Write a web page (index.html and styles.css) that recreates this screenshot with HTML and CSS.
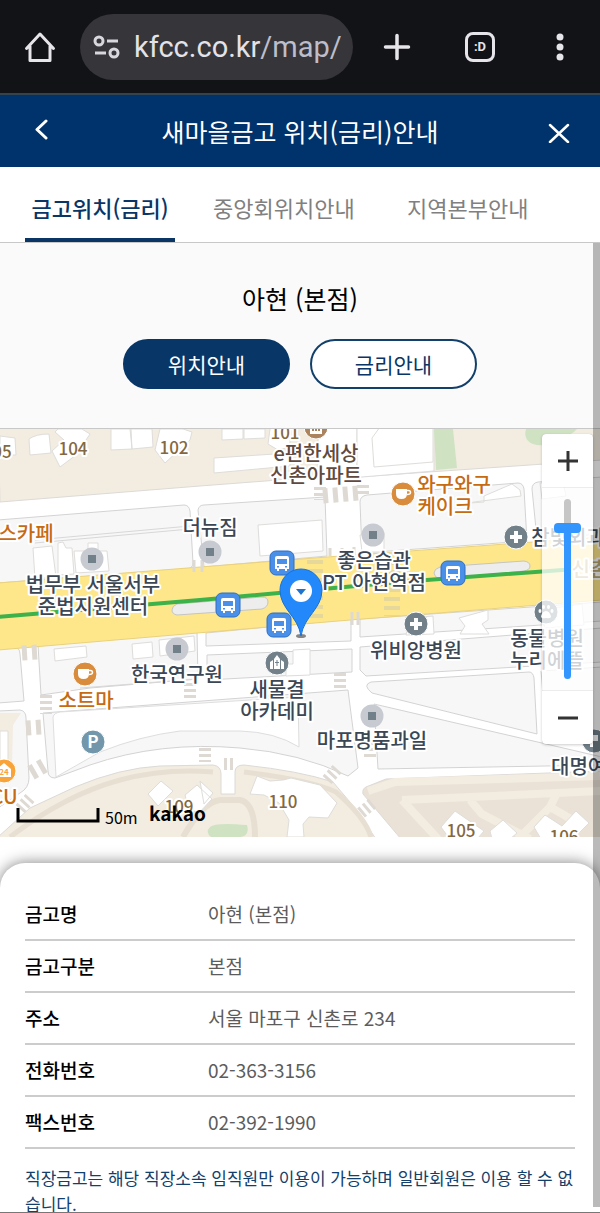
FILE: index.html
```html
<!DOCTYPE html>
<html lang="ko">
<head>
    <meta charset="UTF-8">
    <meta name="viewport" content="width=device-width, initial-scale=1.0">
    <title>새마을금고 위치(금리)안내</title>
    <link rel="stylesheet" href="styles.css">
</head>
<body>
    <div class="browser-bar">
        <button class="bar-btn" type="button" aria-label="홈">
            <svg width="34" height="34" viewBox="0 0 34 34" fill="none" stroke="#e6e5ea" stroke-width="3" stroke-linejoin="round" stroke-linecap="round">
                <path d="M3.500 18.500L17 4l13.500 14.500M7 16v14.500h20V16"/>
            </svg>
        </button>
        <button class="address" type="button">
            <svg width="28" height="24" viewBox="0 0 28 24" fill="none" stroke="#d7d7dd" stroke-width="3">
                <circle cx="6" cy="6" r="4"/>
                <path d="M14 6h11M2 18h11"/>
                <circle cx="21" cy="18" r="4"/>
            </svg>
            <span class="url">kfcc.co.kr<span class="url-path">/map/</span></span>
        </button>
        <button class="bar-btn bar-btn-wide" type="button" aria-label="새 탭">
            <svg width="28" height="28" viewBox="0 0 28 28" stroke="#e6e5ea" stroke-width="3.500" stroke-linecap="round">
                <path d="M2.500 14h23M14 2.500v23"/>
            </svg>
        </button>
        <button class="bar-btn" type="button" aria-label="탭 전환"><span class="tab-count">:D</span></button>
        <button class="bar-btn" type="button" aria-label="메뉴">
            <svg width="8" height="28" viewBox="0 0 8 28" fill="#e6e5ea">
                <circle cx="4" cy="4" r="3.500"/>
                <circle cx="4" cy="14" r="3.500"/>
                <circle cx="4" cy="24" r="3.500"/>
            </svg>
        </button>
    </div>

    <header class="page-header">
        <a class="header-btn" href="#" aria-label="이전">
            <svg width="16" height="24" viewBox="0 0 16 24" fill="none" stroke="#fff" stroke-width="3" stroke-linecap="round" stroke-linejoin="round">
                <path d="M12 2L3 10.500l9 8.500"/>
            </svg>
        </a>
        <h1>새마을금고 위치(금리)안내</h1>
        <button class="header-btn" type="button" aria-label="닫기">
            <svg width="24" height="24" viewBox="0 0 24 24" fill="none" stroke="#fff" stroke-width="2.500" stroke-linecap="round">
                <path d="M3 6l18 17M21 6L3 23"/>
            </svg>
        </button>
    </header>

    <nav class="tabs">
        <a class="active" href="#">금고위치(금리)</a>
        <a href="#">중앙회위치안내</a>
        <a href="#">지역본부안내</a>
    </nav>

    <main class="content">
        <section class="branch">
            <h2>아현 (본점)</h2>
            <div class="branch-buttons">
                <button class="pill pill-on" type="button">위치안내</button>
                <button class="pill" type="button">금리안내</button>
            </div>
        </section>

        <section class="map">
            <svg class="map-canvas" viewBox="0 429 600 408" preserveAspectRatio="xMidYMid slice">
                <defs>
                    <g id="bus">
                        <rect x="-12" y="-12" width="24" height="24" rx="6" fill="#4a8fe8" stroke="#2f6fc4"/>
                        <path fill="#fff" fill-rule="evenodd" d="M-5-7H5q2 0 2 2V6H5v2H3V6H-3v2H-5V6H-7V-5q0-2 2-2zM-5-4v5H5v-5zM-5 3v1.500h2V3zM3 3v1.500h2V3z"/>
                    </g>
                    <g id="spot">
                        <circle r="11.500" fill="#c8cad1"/>
                        <rect x="-4" y="-4" width="8" height="8" fill="#72808a"/>
                    </g>
                    <g id="hospital">
                        <circle r="12" fill="#72808a" stroke="#fff"/>
                        <path d="M0-6V6M-6 0H6" stroke="#fff" stroke-width="4"/>
                    </g>
                    <g id="cafe">
                        <circle r="12" fill="#d88c3c" stroke="#fff"/>
                        <path fill="#fff" d="M-7-5H4v5q0 5-5.500 5T-7 0z"/>
                        <path fill="none" stroke="#fff" stroke-width="1.500" d="M4-3.500h1.500q2 0 2 2t-3.500 2"/>
                    </g>
                </defs>

                <rect y="429" width="600" height="408" fill="#fff"/>

                <!-- apartment complexes -->
                <g stroke="#dcdad7">
                    <path fill="#f3ece1" d="M-2 427H318V477L200 486 0 502z"/>
                    <path fill="#f3ece1" d="M357 427H602V460L357 477z"/>
                    <path fill="#f3ece1" d="M-2 837L30 808 75 787Q120 768 160 766L213 765Q221 766 221 774V794H235V772Q235 765 244 765Q300 771 333 782L355 808 376 839H-2z"/>
                    <path fill="#eae2d6" d="M401 839L363 794Q362 789 366 787L386 779 602 771V839z"/>
                </g>
                <path fill="#fff" stroke="#dcdcdc" d="M357 427H434V471L362 477Q357 477 357 470z"/>
                <path fill="#cfe3c2" d="M434 429H453L457 468 436 470z"/>
                <path fill="#cfe3c2" d="M526 429H577Q570 437 561 435Q548 449 533 444Q523 440 526 429z"/>
                <path fill="none" stroke="#e8dfd3" stroke-width="5" d="M10 837Q65 795 120 780Q165 768 213 772M244 772Q310 780 336 792Q365 817 371 837"/>
                <path fill="none" stroke="#e8dfd3" stroke-width="6" d="M183 837Q203 802 220 800H240Q255 803 255 837"/>
                <path fill="none" stroke="#f3ece1" stroke-width="8" d="M368 791L395 782 602 776M402 800L602 791M402 800L438 839M470 800L482 814 530 839M556 795L550 807 518 839M550 807L578 823"/>
                <path fill="#cfe3c2" d="M210 827Q215 822 247 825Q250 836 240 837H211Q205 832 210 827z"/>
                <path fill="#e8dfd3" d="M0 760Q32 790 0 805z"/>

                <!-- blocks -->
                <g fill="#f7f7f8" stroke="#d3d3d3">
                    <path d="M-2 520L184 505Q189 505 190 511L193 563Q193 568 187 569L-2 583z"/>
                    <path d="M198 510Q199 505 204 505L325 497 327 556 204 567z"/>
                    <path d="M360 502Q360 496 367 495L518 483Q523 483 524 489L527 541 362 553z"/>
                    <path d="M532 489Q532 483 538 482L602 477V534L537 539z"/>
                    <path d="M-2 649L13 647Q20 647 20 654L24 701-2 703z"/>
                    <path d="M38 645L197 632 198 679 90 688 41 695z"/>
                    <path d="M206 633L351 619V641L206 646z"/>
                    <path d="M207 655L352 649V672L207 680z"/>
                    <path d="M360 619L602 602V621L360 637z"/>
                    <path d="M360 647L602 628V662L366 676 360 670z"/>
                    <path d="M371 682L529 672Q533 672 534 678L537 734 372 693Q362 685 371 682z"/>
                    <path d="M541 671L602 667V742L546 730z"/>
                    <path d="M374 704L602 757V765L378 769z"/>
                    <path d="M-2 711L20 710Q26 711 26 718L29 778Q29 788 20 793L-2 808z"/>
                    <path d="M43 713L348 690 358 768 348 776Q300 753 240 748Q160 741 90 765L55 778Q48 778 48 771z"/>
                </g>
                <path fill="#fff" stroke="#dedede" d="M53 717Q54 713 60 712L298 697 299 747Q275 732 240 731H180Q140 736 100 752L56 777z"/>
                <path fill="#f3ece1" d="M0 713H21L13 725 12 765H0z"/>

                <!-- main avenue -->
                <path fill="#fee78a" stroke="#e9d17c" d="M-2 583L327 557 602 537V600L350 620 -2 650z"/>
                <g fill="#ededee" stroke="#c4c4c4">
                    <path d="M177 604L262 597Q268 597 268 602T262 609L177 615Q172 614 172 610T177 604z"/>
                    <path d="M440 567L524 561Q530 562 530 566T524 571L440 579Q434 577 434 573T440 567z"/>
                </g>
                <path fill="none" stroke="#3db14a" stroke-width="4" d="M-2 617L200 600 400 582 602 567"/>
                <path fill="none" stroke="#d8d8d8" d="M35 543L190 529M35 540L190 526M80 688L198 679"/>

                <!-- crossings -->
                <g fill="none" stroke="#dedad3">
                    <path stroke-width="15" stroke-dasharray="5 5" d="M323 496L359 493M22 653L38 652M26 728L42 727M31 773L45 765"/>
                    <path stroke-width="12" stroke-dasharray="3 3" d="M320 487V500M363 485V497M190 683V699M340 673V690M46 695V714M205 748V762M370 757V742M224 764H236M327 780L338 768M361 813L373 803M20 809L30 798"/>
                    <path stroke="#e6d79a" stroke-width="16" stroke-dasharray="4 5" d="M315 560V620M392 552V616"/>
                    <path stroke-width="3" d="M194 560V572M202 560V572M352 612V625M358 612V625M330 548V556M342 548V556M354 547V555"/>
                </g>

                <!-- buildings -->
                <g fill="#fff" stroke="#deddda">
                    <path d="M0 436L15 438 16 455H0zM29 439Q36 434 49 434L51 453 30 455zM55 432L64 440 52 451 60 467 76 455 90 434 82 429H58z"/>
                    <path d="M111 429L130 429 132 449 111 450zM131 429H152L153 447 132 449zM155 450L165 463 190 440 192 432 183 429H160z"/>
                    <path d="M222 429H243V439L222 440zM244 429H265V438L244 439zM214 458L290 453V466L214 473zM270 429H290V447L278 450 268 444z"/>
                    <path d="M380 427H433V462L374 467 372 438z"/>
                    <path d="M33 548L52 546 56 577 35 579zM58 543L63 542 66 548 72 548 74 574 58 575zM74 551H88V543H98V551L107 551 109 571 76 573z"/>
                    <path d="M258 525L322 520 323 551 260 556zM470 503L484 502 484 496 512 484 520 490 521 496 474 502zM540 483L563 482 566 496 542 499z"/>
                    <path d="M54 649L86 646 87 657 55 661zM132 644L152 642 153 657 133 659zM159 640L194 636 195 651 160 656zM293 650L310 649V675L286 676V664H293z"/>
                    <path d="M360 535L384 533V552H362zM410 618L433 616 434 634 406 635zM459 618L488 610V620L482 624 489 634 460 634 465 626zM540 610L582 604 584 625 545 628z"/>
                    <path d="M0 731H8V766H0zM148 794L161 781 173 791 158 806zM185 795L197 785 212 799 198 814 188 806zM200 781L213 793 204 804z"/>
                    <path d="M250 794L257 776 270 781 283 780 291 778 320 785 337 803 328 818 309 817 303 824 304 837H287L289 820 279 803 264 795z"/>
                    <path d="M441 827L455 811 484 831 478 838H449zM490 831L503 820 517 833 510 839H492zM534 827L545 815 562 826 576 811 589 823 573 839H541z"/>
                </g>

                <!-- place icons -->
                <use href="#spot" x="92" y="559"/>
                <use href="#spot" x="210" y="552"/>
                <use href="#spot" x="373" y="535"/>
                <use href="#spot" x="177" y="649"/>
                <use href="#spot" x="372" y="716"/>
                <use href="#hospital" x="516" y="537"/>
                <use href="#hospital" x="416" y="624"/>
                <use href="#cafe" x="403" y="494"/>
                <use href="#cafe" x="85" y="674"/>
                <g transform="translate(316 427)">
                    <circle r="12" fill="#ab835c" stroke="#fff"/>
                    <path fill="#fff" fill-rule="evenodd" d="M-6-5H6V7H-6zM-4 2v2h2V2zM-1 2v2h2V2zM2 2v2h2V2z"/>
                </g>
                <g transform="translate(277 663)">
                    <circle r="12" fill="#72808a" stroke="#fff"/>
                    <path fill="#fff" fill-rule="evenodd" d="M-7-1l3-2V6h-3zM-3 6V-4L0-8l3 4V6zM4-3l3 2v7H4zM-.500-3v2H-2v1h1.500v3h1V0H2v-1H.500v-2z"/>
                </g>
                <g transform="translate(546 612)">
                    <circle r="12" fill="#72808a" stroke="#fff"/>
                    <g fill="#fff">
                        <path d="M0-1C3-1 5 3 5 5Q4 7 0 6Q-4 7-5 5C-5 3-3-1 0-1z"/>
                        <ellipse cx="-6" cy="-1" rx="1.500" ry="2"/>
                        <ellipse cx="6" cy="-1" rx="1.500" ry="2"/>
                        <ellipse cx="-2.500" cy="-5" rx="1.500" ry="2"/>
                        <ellipse cx="2.500" cy="-5" rx="1.500" ry="2"/>
                    </g>
                </g>
                <g transform="translate(93 742)">
                    <circle r="12" fill="#7297aa" stroke="#fff"/>
                    <text class="icon-text" x="0" y="6">P</text>
                </g>
                <g transform="translate(4 771)">
                    <circle r="12" fill="#f9a43a" stroke="#fff"/>
                    <path fill="#fff" d="M-7-2L0-8l7 6V6H-7z"/>
                    <text class="icon-num" x="0" y="4">24</text>
                </g>
                <g transform="translate(594 741)">
                    <circle r="12" fill="#72808a" stroke="#fff"/>
                    <path fill="#fff" d="M-4-6H4V0H-1V6H-4z"/>
                </g>

                <!-- place names -->
                <g class="label label-number">
                    <text x="2" y="458">05</text>
                    <text x="73" y="455">104</text>
                    <text x="174" y="454">102</text>
                    <text x="285" y="439">101</text>
                    <text x="179" y="813">109</text>
                    <text x="283" y="808">110</text>
                    <text x="461" y="837">105</text>
                    <text x="564" y="843">106</text>
                </g>
                <g class="label label-apt">
                    <text x="316" y="461">e편한세상</text>
                    <text x="316" y="483">신촌아파트</text>
                </g>
                <g class="label label-food">
                    <text x="26" y="541">스카페</text>
                    <text x="454" y="492">와구와구</text>
                    <text x="445" y="514">케이크</text>
                    <text x="86" y="708">소트마</text>
                    <text x="4" y="804">CU</text>
                </g>
                <g class="label">
                    <text x="210" y="535">더뉴짐</text>
                    <text x="93" y="592">법무부 서울서부</text>
                    <text x="93" y="614">준법지원센터</text>
                    <text x="374" y="568">좋은습관</text>
                    <text x="374" y="590">PT 아현역점</text>
                    <text x="177" y="682">한국연구원</text>
                    <text x="277" y="697">새물결</text>
                    <text x="277" y="719">아카데미</text>
                    <text x="416" y="658">위비앙병원</text>
                    <text x="372" y="748">마포명품과일</text>
                    <text x="568" y="545">참빛외과</text>
                    <text x="547" y="646">동물병원</text>
                    <text x="547" y="668">누리에뜰</text>
                    <text x="597" y="774">대명여행사</text>
                </g>
                <text class="label label-area" x="590" y="577">신촌</text>

                <use href="#bus" x="282" y="563"/>
                <use href="#bus" x="228" y="605"/>
                <use href="#bus" x="279" y="625"/>
                <use href="#bus" x="453" y="573"/>

                <!-- branch marker -->
                <ellipse cx="301" cy="636" rx="5" ry="2" fill="#858585"/>
                <path fill="#2389fa" stroke="#1672d8" d="M301 636C298 616 280 609 280 590A21 21 0 0 1 322 590C322 609 304 616 301 636z"/>
                <circle cx="301" cy="591" r="11" fill="#fff"/>
                <path fill="#1f74d0" d="M296 589H306L301 595z"/>

                <!-- scale bar -->
                <path fill="none" stroke="#000" stroke-width="3" d="M18 808V821H98V808"/>
                <text class="scale-text" x="105" y="824">50m</text>
                <text class="map-brand" x="149" y="821">kakao</text>
            </svg>

            <div class="zoom">
                <button type="button" aria-label="확대">
                    <svg width="22" height="22" viewBox="0 0 22 22" stroke="#333" stroke-width="3"><path d="M1 11h20M11 1v20"/></svg>
                </button>
                <input class="zoom-range" type="range" min="0" max="100" value="86" aria-label="지도 배율">
                <button type="button" aria-label="축소">
                    <svg width="22" height="22" viewBox="0 0 22 22" stroke="#333" stroke-width="3"><path d="M1 11h20"/></svg>
                </button>
            </div>
        </section>

        <section class="info">
            <table>
                <tr><th scope="row">금고명</th><td>아현 (본점)</td></tr>
                <tr><th scope="row">금고구분</th><td>본점</td></tr>
                <tr><th scope="row">주소</th><td>서울 마포구 신촌로 234</td></tr>
                <tr><th scope="row">전화번호</th><td>02-363-3156</td></tr>
                <tr><th scope="row">팩스번호</th><td>02-392-1990</td></tr>
            </table>
            <p class="notice">직장금고는 해당 직장소속 임직원만 이용이 가능하며 일반회원은 이용 할 수 없습니다.</p>
        </section>

        <div class="scroll-thumb"></div>
    </main>
</body>
</html>
```
FILE: styles.css
```css
* { box-sizing: border-box; }
body {
    margin: 0;
    height: 100vh;
    display: flex;
    flex-direction: column;
    overflow: hidden;
    font-family: 'Noto Sans CJK KR', sans-serif;
    background-color: #ffffff;
    color: #000000;
}
button {
    font-family: inherit;
    border: 0;
    padding: 0;
    background: none;
    cursor: pointer;
}
a { text-decoration: none; }
h1, h2, p { margin: 0; }
svg { display: block; }

/* browser toolbar */
.browser-bar {
    display: flex;
    align-items: center;
    flex-shrink: 0;
    height: 95px;
    background-color: #121317;
    border-bottom: 2px solid #33434f;
}
.bar-btn {
    display: flex;
    align-items: center;
    justify-content: center;
    width: 80px;
    height: 66px;
}
.bar-btn-wide { width: 87px; }
.address {
    display: flex;
    align-items: center;
    gap: 13px;
    flex: 1;
    min-width: 0;
    height: 66px;
    padding: 0 11px 0 13px;
    border-radius: 33px;
    background-color: #35353a;
}
.address svg { flex-shrink: 0; }
.url {
    overflow: hidden;
    font-family: Roboto, sans-serif;
    font-size: 29px;
    line-height: 40px;
    white-space: nowrap;
    color: #e3e2e8;
}
.url-path { color: #bdbec9; }
.tab-count {
    width: 30px;
    height: 30px;
    border: 3px solid #e6e5ea;
    border-radius: 8px;
    font-family: Roboto, sans-serif;
    font-size: 13px;
    font-weight: 700;
    line-height: 23px;
    color: #e6e5ea;
}

/* title bar */
.page-header {
    display: flex;
    align-items: center;
    justify-content: space-between;
    flex-shrink: 0;
    height: 72px;
    background-color: #00326b;
    color: #ffffff;
}
.page-header h1 {
    font-size: 25px;
    font-weight: 400;
    line-height: 36px;
}
.header-btn {
    display: flex;
    align-items: center;
    justify-content: center;
    width: 83px;
    height: 72px;
}

.tabs {
    display: flex;
    gap: 32px;
    flex-shrink: 0;
    height: 76px;
    padding: 0 25px;
    border-bottom: 1px solid #c8c8c8;
}
.tabs a {
    min-width: 150px;
    padding: 0 6px;
    font-size: 22px;
    line-height: 80px;
    text-align: center;
    white-space: nowrap;
    color: #808080;
}
.tabs .active {
    font-weight: 500;
    color: #0a3564;
    border-bottom: 4px solid #0a3564;
}

.content {
    position: relative;
    flex: 1;
    overflow: hidden;
    border-bottom: 1px solid #777777;
}
.scroll-thumb {
    position: absolute;
    top: 0;
    right: 0;
    bottom: 5px;
    width: 7px;
    background-color: rgba(0, 0, 0, 0.27);
}

.branch {
    padding: 35px 25px 39px;
    background-color: #fafafa;
    border-bottom: 1px solid #c8c8c8;
    text-align: center;
}
.branch h2 {
    margin-bottom: 21px;
    font-size: 25px;
    font-weight: 400;
    line-height: 40px;
}
.branch-buttons {
    display: flex;
    justify-content: center;
    gap: 20px;
}
.pill {
    width: 167px;
    height: 50px;
    border: 2px solid #12406b;
    border-radius: 25px;
    background-color: #ffffff;
    font-size: 21px;
    color: #0a3564;
}
.pill-on {
    background-color: #083767;
    border-color: #083767;
    color: #ffffff;
}

/* map */
.map { position: relative; }
.map-canvas {
    width: 100%;
    height: 408px;
}
.label {
    font-size: 20px;
    font-weight: 500;
    text-anchor: middle;
    fill: #3b4754;
    stroke: #ffffff;
    stroke-width: 4px;
    stroke-linejoin: round;
    paint-order: stroke;
}
.label-number {
    font-size: 17px;
    fill: #84683f;
}
.label-apt { fill: #604a3f; }
.label-food { fill: #c66a13; }
.label-area { fill: #b8a873; }
.icon-text {
    font-size: 17px;
    font-weight: 700;
    text-anchor: middle;
    fill: #ffffff;
}
.icon-num {
    font-size: 8px;
    font-weight: 700;
    text-anchor: middle;
    fill: #f9a43a;
}
.scale-text { font-size: 16px; }
.map-brand {
    font-size: 19px;
    font-weight: 700;
}
.zoom {
    position: absolute;
    top: 5px;
    right: 7px;
    display: flex;
    flex-direction: column;
    width: 51px;
    height: 310px;
    border-radius: 4px;
    background-color: rgba(255, 255, 255, 0.76);
    box-shadow: 0 1px 3px rgba(0, 0, 0, 0.2);
    overflow: hidden;
}
.zoom button {
    display: flex;
    align-items: center;
    justify-content: center;
    height: 53px;
    background-color: #ffffff;
    box-shadow: 0 0 1px rgba(0, 0, 0, 0.4);
}
.zoom-range {
    flex: 1;
    min-height: 0;
    width: 27px;
    margin: 12px auto;
    writing-mode: vertical-lr;
    direction: rtl;
    appearance: none;
    background: none;
}
.zoom-range::-webkit-slider-runnable-track {
    width: 7px;
    height: 100%;
    border-radius: 4px;
    background: linear-gradient(to top, #3396ff 84%, #c6c6c6 84%);
}
.zoom-range::-webkit-slider-thumb {
    appearance: none;
    width: 27px;
    height: 10px;
    margin-left: -10px;
    border-radius: 4px;
    background-color: #3396ff;
}

/* branch details */
.info {
    position: relative;
    min-height: 400px;
    margin-top: 26px;
    padding: 25px 25px 0;
    border-radius: 25px 25px 0 0;
    background-color: #ffffff;
    box-shadow: 0 0 15px rgba(0, 0, 0, 0.5);
}
.info table {
    width: 100%;
    border-collapse: collapse;
}
.info th, .info td {
    height: 52px;
    padding: 0;
    border-bottom: 2px solid #cccccc;
    font-size: 19px;
    line-height: 28px;
    text-align: left;
}
.info th {
    width: 183px;
    font-weight: 500;
}
.info td { color: #5c5c5c; }
.notice {
    padding-top: 16px;
    font-size: 17px;
    line-height: 26px;
    color: #12406b;
}
```
